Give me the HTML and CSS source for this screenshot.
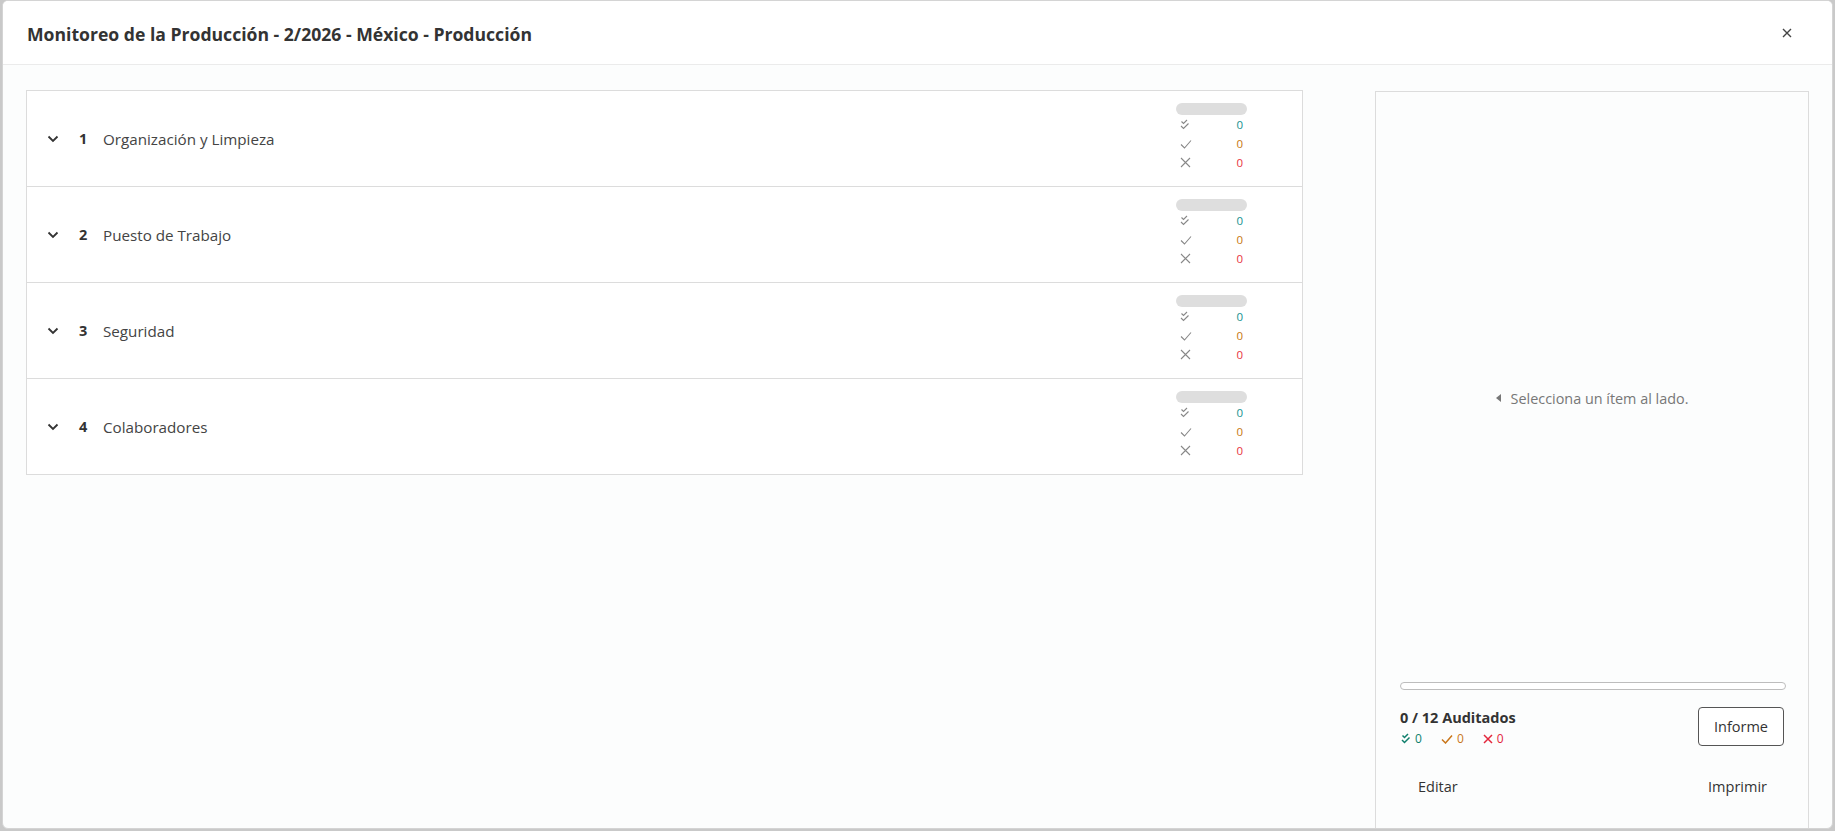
FILE: index.html
```html
<!DOCTYPE html>
<html lang="es">
<head>
<meta charset="utf-8">
<title>Monitoreo de la Producción</title>
<link rel="stylesheet" href="styles.css">
</head>
<body>
<div class="modal">
  <header class="modal-header">
    <h1 class="modal-title">Monitoreo de la Producción - 2/2026 - México - Producción</h1>
    <button class="close-btn" aria-label="Cerrar">
      <svg width="10" height="10" viewBox="0 0 10 10"><path d="M1 1l8 8M9 1l-8 8" stroke="#444" stroke-width="1.4" fill="none"/></svg>
    </button>
  </header>
  <div class="modal-body">
    <div class="sections">
      <div class="section-row">
        <svg class="chev" width="12" height="8" viewBox="0 0 12 8"><path d="M1.5 1.5l4.5 4.5 4.5-4.5" stroke="#333" stroke-width="1.8" fill="none"/></svg>
        <span class="num">1</span>
        <span class="name">Organización y Limpieza</span>
        <div class="stats">
          <div class="pill"></div>
          <div class="stat"><svg width="10" height="11" viewBox="0 0 10 11"><path d="M1.5 2.5l2 2 3.5-3.5M1 7l2.5 2.5 5-5" stroke="#888" stroke-width="1.1" fill="none"/></svg><span class="v teal">0</span></div>
          <div class="stat"><svg width="12" height="10" viewBox="0 0 12 10"><path d="M1 5.5l3.5 3.5L11 1.5" stroke="#888" stroke-width="1.1" fill="none"/></svg><span class="v orange">0</span></div>
          <div class="stat"><svg width="11" height="11" viewBox="0 0 11 11"><path d="M1 1l9 9M10 1l-9 9" stroke="#888" stroke-width="1.1" fill="none"/></svg><span class="v red">0</span></div>
        </div>
      </div>
      <div class="section-row">
        <svg class="chev" width="12" height="8" viewBox="0 0 12 8"><path d="M1.5 1.5l4.5 4.5 4.5-4.5" stroke="#333" stroke-width="1.8" fill="none"/></svg>
        <span class="num">2</span>
        <span class="name">Puesto de Trabajo</span>
        <div class="stats">
          <div class="pill"></div>
          <div class="stat"><svg width="10" height="11" viewBox="0 0 10 11"><path d="M1.5 2.5l2 2 3.5-3.5M1 7l2.5 2.5 5-5" stroke="#888" stroke-width="1.1" fill="none"/></svg><span class="v teal">0</span></div>
          <div class="stat"><svg width="12" height="10" viewBox="0 0 12 10"><path d="M1 5.5l3.5 3.5L11 1.5" stroke="#888" stroke-width="1.1" fill="none"/></svg><span class="v orange">0</span></div>
          <div class="stat"><svg width="11" height="11" viewBox="0 0 11 11"><path d="M1 1l9 9M10 1l-9 9" stroke="#888" stroke-width="1.1" fill="none"/></svg><span class="v red">0</span></div>
        </div>
      </div>
      <div class="section-row">
        <svg class="chev" width="12" height="8" viewBox="0 0 12 8"><path d="M1.5 1.5l4.5 4.5 4.5-4.5" stroke="#333" stroke-width="1.8" fill="none"/></svg>
        <span class="num">3</span>
        <span class="name">Seguridad</span>
        <div class="stats">
          <div class="pill"></div>
          <div class="stat"><svg width="10" height="11" viewBox="0 0 10 11"><path d="M1.5 2.5l2 2 3.5-3.5M1 7l2.5 2.5 5-5" stroke="#888" stroke-width="1.1" fill="none"/></svg><span class="v teal">0</span></div>
          <div class="stat"><svg width="12" height="10" viewBox="0 0 12 10"><path d="M1 5.5l3.5 3.5L11 1.5" stroke="#888" stroke-width="1.1" fill="none"/></svg><span class="v orange">0</span></div>
          <div class="stat"><svg width="11" height="11" viewBox="0 0 11 11"><path d="M1 1l9 9M10 1l-9 9" stroke="#888" stroke-width="1.1" fill="none"/></svg><span class="v red">0</span></div>
        </div>
      </div>
      <div class="section-row">
        <svg class="chev" width="12" height="8" viewBox="0 0 12 8"><path d="M1.5 1.5l4.5 4.5 4.5-4.5" stroke="#333" stroke-width="1.8" fill="none"/></svg>
        <span class="num">4</span>
        <span class="name">Colaboradores</span>
        <div class="stats">
          <div class="pill"></div>
          <div class="stat"><svg width="10" height="11" viewBox="0 0 10 11"><path d="M1.5 2.5l2 2 3.5-3.5M1 7l2.5 2.5 5-5" stroke="#888" stroke-width="1.1" fill="none"/></svg><span class="v teal">0</span></div>
          <div class="stat"><svg width="12" height="10" viewBox="0 0 12 10"><path d="M1 5.5l3.5 3.5L11 1.5" stroke="#888" stroke-width="1.1" fill="none"/></svg><span class="v orange">0</span></div>
          <div class="stat"><svg width="11" height="11" viewBox="0 0 11 11"><path d="M1 1l9 9M10 1l-9 9" stroke="#888" stroke-width="1.1" fill="none"/></svg><span class="v red">0</span></div>
        </div>
      </div>
    </div>
    <aside class="detail">
      <div class="placeholder">
        <svg width="5" height="8" viewBox="0 0 5 8"><path d="M5 0v8L0 4z" fill="#777"/></svg>
        <span>Selecciona un ítem al lado.</span>
      </div>
      <div class="footer">
        <div class="progress"></div>
        <div class="summary">
          <div class="summary-text">
            <div class="audited">0 / 12 Auditados</div>
            <div class="totals">
              <span class="tot teal-d"><svg width="10" height="11" viewBox="0 0 10 11"><path d="M1.5 2.5l2 2 3.5-3.5M1 7l2.5 2.5 5-5" stroke="#0f7f6c" stroke-width="1.5" fill="none"/></svg>0</span>
              <span class="tot orange-d"><svg width="12" height="10" viewBox="0 0 12 10"><path d="M1 5.5l3.5 3.5L11 1.5" stroke="#c9761a" stroke-width="1.5" fill="none"/></svg>0</span>
              <span class="tot red-d"><svg width="10" height="10" viewBox="0 0 10 10"><path d="M1 1l8 8M9 1l-8 8" stroke="#e3263c" stroke-width="1.5" fill="none"/></svg>0</span>
            </div>
          </div>
          <button class="btn-outline">Informe</button>
        </div>
        <div class="actions">
          <button class="btn-text">Editar</button>
          <button class="btn-text">Imprimir</button>
        </div>
      </div>
    </aside>
  </div>
</div>
</body>
</html>
```
FILE: styles.css
```css
* { box-sizing: border-box; }
html, body { height: 100%; }
body {
  margin: 0;
  padding: 0 2px 2px 2px;
  background: #c9c9c9;
  font-family: "Open Sans", "Noto Sans", sans-serif;
  color: #333;
  overflow: hidden;
}
.modal {
  height: 829px;
  background: #fcfdfd;
  border: 1px solid #d4d4d4;
  border-radius: 6px;
  display: flex;
  flex-direction: column;
  overflow: hidden;
}
.modal-header {
  height: 64px;
  flex: none;
  background: #fff;
  border-bottom: 1px solid #ebebeb;
  display: flex;
  align-items: center;
  padding: 0 39px 0 24px;
}
.modal-title {
  margin: 0;
  font-size: 17.6px;
  font-weight: 700;
  color: #333;
  flex: 1;
  margin-top: 2px;
}
.close-btn {
  background: none;
  border: 0;
  padding: 0;
  width: 12px;
  height: 12px;
  display: flex;
  align-items: center;
  justify-content: center;
  cursor: pointer;
}
.modal-body {
  flex: 1;
  display: flex;
  gap: 72px;
  padding: 25px 24px 0 23px;
  min-height: 0;
}
.sections {
  width: 1277px;
  flex: none;
  align-self: flex-start;
  border: 1px solid #dcdcdc;
  background: #fff;
}
.section-row {
  height: 96px;
  display: flex;
  align-items: center;
  padding-left: 20px;
  border-bottom: 1px solid #dcdcdc;
}
.section-row:last-child { border-bottom: 0; height: 95px; }
.chev { flex: none; margin-top: 1px; }
.num {
  font-weight: 700;
  font-size: 14.5px;
  color: #333;
  margin-left: 20px;
  width: 8px;
}
.name {
  margin-left: 16px;
  font-size: 15.2px;
  color: #444;
  flex: 1;
}
.stats {
  width: 126px;
  flex: none;
  align-self: flex-start;
  padding-top: 12px;
}
.pill {
  width: 71px;
  height: 12px;
  border-radius: 6px;
  background: #dedede;
}
.stat {
  width: 67px;
  height: 19px;
  display: flex;
  align-items: center;
  justify-content: space-between;
  padding-left: 4px;
}
.v { font-size: 11.5px; }
.teal { color: #15918f; }
.orange { color: #c7770f; }
.red { color: #e8313d; }
.detail {
  width: 434px;
  flex: none;
  margin-top: 1px;
  border: 1px solid #dcdcdc;
  border-bottom: 0;
  background: #fcfdfd;
  display: flex;
  flex-direction: column;
}
.placeholder {
  flex: 1;
  display: flex;
  align-items: center;
  justify-content: center;
  gap: 10px;
  padding-top: 22px;
  color: #777;
  font-size: 14.4px;
}
.footer {
  flex: none;
  height: 146px;
  padding: 0 22px 0 24px;
}
.progress {
  height: 8px;
  border: 1px solid #bdbdbd;
  border-radius: 4px;
  background: #fff;
}
.summary {
  display: flex;
  justify-content: space-between;
  align-items: flex-start;
  margin-top: 17px;
}
.audited {
  font-weight: 700;
  font-size: 14.5px;
  color: #333;
  line-height: 20px;
  margin-top: 1px;
}
.totals {
  display: flex;
  gap: 19px;
  font-size: 12px;
  margin-top: 2px;
  padding-left: 1px;
}
.tot { display: inline-flex; align-items: center; gap: 4px; }
.teal-d { color: #0f7f6c; }
.orange-d { color: #c9761a; }
.red-d { color: #e3263c; }
.btn-outline {
  width: 86px;
  height: 39px;
  margin-right: 2px;
  border: 1px solid #555;
  border-radius: 4px;
  background: #fff;
  font-family: inherit;
  font-size: 14.5px;
  font-weight: 500;
  color: #333;
  cursor: pointer;
}
.actions {
  display: flex;
  justify-content: space-between;
  margin-top: 29px;
  padding: 0 19px 0 18px;
}
.btn-text {
  background: none;
  border: 0;
  padding: 0;
  font-family: inherit;
  font-size: 14.5px;
  font-weight: 500;
  color: #333;
  cursor: pointer;
  line-height: 22px;
}
```
